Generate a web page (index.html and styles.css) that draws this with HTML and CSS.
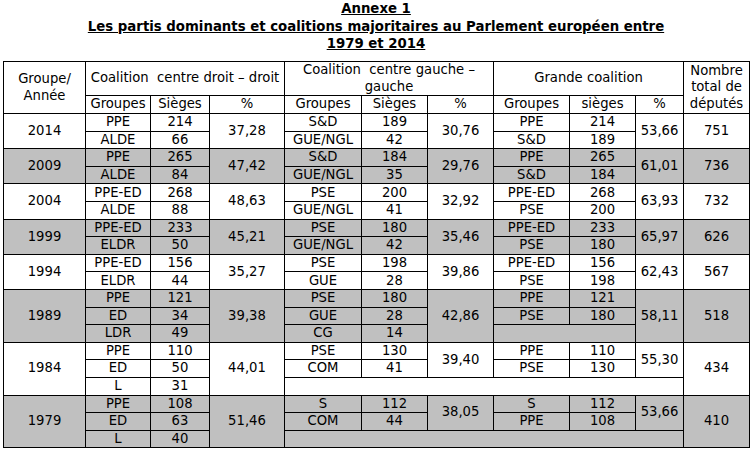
FILE: index.html
```html
<!DOCTYPE html>
<html lang="fr">
<head>
<meta charset="utf-8">
<title>Annexe 1</title>
<link rel="stylesheet" href="styles.css">
</head>
<body>
<div class="title">
  <div class="tline">Annexe 1</div>
  <div class="tline">Les partis dominants et coalitions majoritaires au Parlement européen entre</div>
  <div class="tline">1979 et 2014</div>
</div>
<table class="data">
  <colgroup>
    <col class="c-year"><col class="c-g1"><col class="c-s1"><col class="c-p1">
    <col class="c-g2"><col class="c-s2"><col class="c-p2">
    <col class="c-g3"><col class="c-s3"><col class="c-p3"><col class="c-tot">
  </colgroup>
  <thead>
    <tr class="h1">
      <th rowspan="2">Groupe/<br>Année</th>
      <th colspan="3">Coalition&nbsp; centre droit – droit</th>
      <th colspan="3">Coalition&nbsp; centre gauche – gauche</th>
      <th colspan="3">Grande coalition</th>
      <th rowspan="2">Nombre total de députés</th>
    </tr>
    <tr class="h2">
      <th>Groupes</th><th>Sièges</th><th>%</th>
      <th>Groupes</th><th>Sièges</th><th>%</th>
      <th>Groupes</th><th>sièges</th><th>%</th>
    </tr>
  </thead>
  <tbody class="white">
    <tr><td rowspan="2">2014</td><td>PPE</td><td>214</td><td rowspan="2">37,28</td><td>S&amp;D</td><td>189</td><td rowspan="2">30,76</td><td>PPE</td><td>214</td><td rowspan="2">53,66</td><td rowspan="2">751</td></tr>
    <tr><td>ALDE</td><td>66</td><td>GUE/NGL</td><td>42</td><td>S&amp;D</td><td>189</td></tr>
  </tbody>
  <tbody class="grey">
    <tr><td rowspan="2">2009</td><td>PPE</td><td>265</td><td rowspan="2">47,42</td><td>S&amp;D</td><td>184</td><td rowspan="2">29,76</td><td>PPE</td><td>265</td><td rowspan="2">61,01</td><td rowspan="2">736</td></tr>
    <tr><td>ALDE</td><td>84</td><td>GUE/NGL</td><td>35</td><td>S&amp;D</td><td>184</td></tr>
  </tbody>
  <tbody class="white">
    <tr><td rowspan="2">2004</td><td>PPE-ED</td><td>268</td><td rowspan="2">48,63</td><td>PSE</td><td>200</td><td rowspan="2">32,92</td><td>PPE-ED</td><td>268</td><td rowspan="2">63,93</td><td rowspan="2">732</td></tr>
    <tr><td>ALDE</td><td>88</td><td>GUE/NGL</td><td>41</td><td>PSE</td><td>200</td></tr>
  </tbody>
  <tbody class="grey">
    <tr><td rowspan="2">1999</td><td>PPE-ED</td><td>233</td><td rowspan="2">45,21</td><td>PSE</td><td>180</td><td rowspan="2">35,46</td><td>PPE-ED</td><td>233</td><td rowspan="2">65,97</td><td rowspan="2">626</td></tr>
    <tr><td>ELDR</td><td>50</td><td>GUE/NGL</td><td>42</td><td>PSE</td><td>180</td></tr>
  </tbody>
  <tbody class="white">
    <tr><td rowspan="2">1994</td><td>PPE-ED</td><td>156</td><td rowspan="2">35,27</td><td>PSE</td><td>198</td><td rowspan="2">39,86</td><td>PPE-ED</td><td>156</td><td rowspan="2">62,43</td><td rowspan="2">567</td></tr>
    <tr><td>ELDR</td><td>44</td><td>GUE</td><td>28</td><td>PSE</td><td>198</td></tr>
  </tbody>
  <tbody class="grey">
    <tr><td rowspan="3">1989</td><td>PPE</td><td>121</td><td rowspan="3">39,38</td><td>PSE</td><td>180</td><td rowspan="3">42,86</td><td>PPE</td><td>121</td><td rowspan="3">58,11</td><td rowspan="3">518</td></tr>
    <tr><td>ED</td><td>34</td><td>GUE</td><td>28</td><td>PSE</td><td>180</td></tr>
    <tr><td>LDR</td><td>49</td><td>CG</td><td>14</td><td colspan="2"></td></tr>
  </tbody>
  <tbody class="white">
    <tr><td rowspan="3">1984</td><td>PPE</td><td>110</td><td rowspan="3">44,01</td><td>PSE</td><td>130</td><td rowspan="2">39,40</td><td>PPE</td><td>110</td><td rowspan="2">55,30</td><td rowspan="3">434</td></tr>
    <tr><td>ED</td><td>50</td><td>COM</td><td>41</td><td>PSE</td><td>130</td></tr>
    <tr><td>L</td><td>31</td><td colspan="6"></td></tr>
  </tbody>
  <tbody class="grey">
    <tr><td rowspan="3">1979</td><td>PPE</td><td>108</td><td rowspan="3">51,46</td><td>S</td><td>112</td><td rowspan="2">38,05</td><td>S</td><td>112</td><td rowspan="2">53,66</td><td rowspan="3">410</td></tr>
    <tr><td>ED</td><td>63</td><td>COM</td><td>44</td><td>PPE</td><td>108</td></tr>
    <tr><td>L</td><td>40</td><td colspan="6"></td></tr>
  </tbody>
</table>
</body>
</html>
```
FILE: styles.css
```css
html, body {
  margin: 0;
  padding: 0;
  background: #ffffff;
}
body {
  width: 752px;
  font-family: "DejaVu Sans", Verdana, sans-serif;
  color: #000000;
}
.title {
  text-align: center;
  font-weight: bold;
  font-size: 13.3px;
  line-height: 17.7px;
  padding-top: 0;
  margin-bottom: 8px;
}
.tline {
  text-decoration: underline;
}
.data {
  margin-left: 3px;
  width: 746px;
  border-collapse: collapse;
  table-layout: fixed;
  font-size: 13.2px;
  line-height: 16.5px;
}
.data th, .data td {
  border: 1px solid #000000;
  padding: 0 2px;
  text-align: center;
  vertical-align: middle;
  font-weight: normal;
}
.c-year { width: 82px; }
.c-g1 { width: 65px; }
.c-s1 { width: 59px; }
.c-p1 { width: 75px; }
.c-g2 { width: 77px; }
.c-s2 { width: 66px; }
.c-p2 { width: 66px; }
.c-g3 { width: 76px; }
.c-s3 { width: 66px; }
.c-p3 { width: 48px; }
.c-tot { width: 66px; }
.h1 { height: 33px; }
.h2 { height: 18px; }
tbody tr { height: 17.6px; }
.grey td { background: #c0c0c0; }
.white td { background: #ffffff; }
```
